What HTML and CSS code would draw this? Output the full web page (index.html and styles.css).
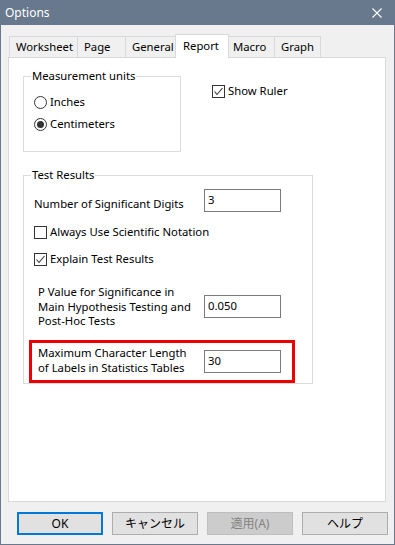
FILE: index.html
```html
<!DOCTYPE html>
<html lang="en">
<head>
    <meta charset="UTF-8">
    <title>Options</title>
    <link rel="stylesheet" href="styles.css">
</head>
<body>
    <div class="window">
        <div class="titlebar">
            <span class="title">Options</span>
            <svg class="close" width="10" height="10" viewBox="0 0 10 10">
                <path d="M0.5 0.5L9.5 9.5M9.5 0.5L0.5 9.5" stroke="#fff" stroke-width="1.1" fill="none"/>
            </svg>
        </div>

        <div class="tabs">
            <div class="tab tab-worksheet">Worksheet</div>
            <div class="tab tab-page">Page</div>
            <div class="tab tab-general">General</div>
            <div class="tab tab-report active">Report</div>
            <div class="tab tab-macro">Macro</div>
            <div class="tab tab-graph">Graph</div>
        </div>

        <div class="panel">
            <div class="top-row">
                <fieldset class="group group-units">
                    <legend>Measurement units</legend>
                    <label class="option option-first"><span class="radio"></span>Inches</label>
                    <label class="option"><span class="radio checked"></span>Centimeters</label>
                </fieldset>
                <label class="option show-ruler">
                    <span class="check">
                        <svg width="11" height="11" viewBox="0 0 11 11"><path d="M1.5 5.5L4 8.5L9.5 2" stroke="#333" stroke-width="1.1" fill="none"/></svg>
                    </span>Show Ruler
                </label>
            </div>

            <fieldset class="group group-tests">
                <legend>Test Results</legend>
                <div class="field field-digits">
                    <span class="field-label">Number of Significant Digits</span>
                    <div class="input">3</div>
                </div>
                <label class="option option-sci"><span class="check"></span>Always Use Scientific Notation</label>
                <label class="option option-explain">
                    <span class="check">
                        <svg width="11" height="11" viewBox="0 0 11 11"><path d="M1.5 5.5L4 8.5L9.5 2" stroke="#333" stroke-width="1.1" fill="none"/></svg>
                    </span>Explain Test Results
                </label>
                <div class="field field-pvalue">
                    <span class="field-label">P Value for Significance in<br>Main Hypothesis Testing and<br>Post-Hoc Tests</span>
                    <div class="input">0.050</div>
                </div>
                <div class="field field-maxlen">
                    <span class="field-label">Maximum Character Length<br>of Labels in Statistics Tables</span>
                    <div class="input">30</div>
                </div>
            </fieldset>
        </div>

        <div class="buttons">
            <div class="button default">OK</div>
            <div class="button">キャンセル</div>
            <div class="button disabled">適用(A)</div>
            <div class="button">ヘルプ</div>
        </div>
    </div>
</body>
</html>
```

FILE: styles.css
```css
body {
    margin: 0;
    font-family: "Noto Sans", "Noto Sans CJK JP", sans-serif;
    font-size: 11.3px;
    line-height: 16px;
    color: #000;
}
.window {
    width: 395px;
    height: 545px;
    box-sizing: border-box;
    border: 1px solid #68788d;
    border-top: 0;
    background-color: #f0f0f0;
}
.titlebar {
    height: 25px;
    background-color: #68788d;
    display: flex;
    align-items: center;
    justify-content: space-between;
    padding: 0 12px 0 4px;
    color: #fff;
}
.title {
    font-size: 12px;
}

/* Tabs */
.tabs {
    display: flex;
    align-items: flex-end;
    margin: 11px 0 0 8px;
    height: 21px;
}
.tab {
    box-sizing: border-box;
    height: 21px;
    border: 1px solid #d9d9d9;
    border-bottom: 0;
    margin-left: -1px;
    padding-left: 6px;
    line-height: 19px;
    background-color: #f0f0f0;
}
.tab-worksheet { width: 69px; margin-left: 0; }
.tab-page { width: 49px; }
.tab-general { width: 52px; }
.tab-report { width: 54px; }
.tab-macro { width: 47px; padding-left: 4px; }
.tab-graph { width: 47px; }
.tab.active {
    height: 24px;
    margin-left: -2px;
    margin-bottom: -1px;
    padding-left: 7px;
    line-height: 21px;
    background-color: #fff;
    position: relative;
    z-index: 1;
}

.panel {
    box-sizing: border-box;
    width: 378px;
    height: 445px;
    margin-left: 7px;
    border: 1px solid #d9d9d9;
    background-color: #fff;
}

/* Group boxes */
.top-row {
    display: flex;
    align-items: flex-start;
}
.group {
    box-sizing: border-box;
    margin: 0 0 0 14px;
    padding: 0 0 0 10px;
    border: 1px solid #dcdcdc;
    min-width: 0;
}
.group legend {
    margin-left: -3px;
    padding: 0 1px;
    line-height: 16px;
}
.group-units {
    width: 158px;
    height: 84px;
    margin-top: 10px;
}
.group-tests {
    width: 290px;
    height: 217px;
    margin-top: 15px;
}

.option {
    display: flex;
    align-items: center;
    height: 16px;
    white-space: nowrap;
}
.option-first {
    margin-top: 10px;
    margin-bottom: 6px;
}
.show-ruler {
    margin: 25px 0 0 31px;
}
.option-sci {
    margin-top: 12px;
}
.option-explain {
    margin-top: 11px;
}

.radio {
    box-sizing: border-box;
    width: 13px;
    height: 13px;
    border: 1px solid #333;
    border-radius: 50%;
    margin-right: 3px;
    display: flex;
    align-items: center;
    justify-content: center;
}
.radio.checked:after {
    content: "";
    width: 7px;
    height: 7px;
    border-radius: 50%;
    background-color: #333;
}
.check {
    box-sizing: border-box;
    width: 13px;
    height: 13px;
    border: 1px solid #333;
    margin-right: 3px;
    display: flex;
    align-items: center;
    justify-content: center;
}
.check svg {
    display: block;
}

/* Text fields */
.field {
    display: flex;
}
.field-label {
    width: 166px;
    flex-shrink: 0;
    white-space: nowrap;
}
.input {
    box-sizing: border-box;
    width: 77px;
    height: 23px;
    border: 1px solid #7a7a7a;
    padding: 2px 0 0 3px;
    line-height: 16px;
    background-color: #fff;
}
.field-digits {
    margin-top: 6px;
    align-items: flex-end;
}
.field-digits .field-label {
    width: 170px;
}
.field-pvalue {
    margin-top: 18px;
    padding-left: 4px;
    align-items: center;
}
.field-pvalue .field-label {
    line-height: 14.5px;
}
.field-maxlen {
    box-sizing: border-box;
    width: 266px;
    height: 43px;
    margin: 11px 0 0 -5px;
    padding-left: 6px;
    border: 3px solid #e00;
    align-items: center;
}
.field-maxlen .field-label {
    line-height: 15px;
    margin-top: -3px;
}

/* Dialog buttons */
.buttons {
    display: flex;
    gap: 9px;
    margin: 10px 0 0 16px;
}
.button {
    box-sizing: border-box;
    width: 86px;
    height: 23px;
    border: 1px solid #adadad;
    background-color: #e1e1e1;
    font-size: 12px;
    display: flex;
    align-items: center;
    justify-content: center;
}
.button.default {
    border: 2px solid #0078d7;
}
.button.disabled {
    background-color: #cccccc;
    border-color: #bfbfbf;
    color: #838383;
}
```
